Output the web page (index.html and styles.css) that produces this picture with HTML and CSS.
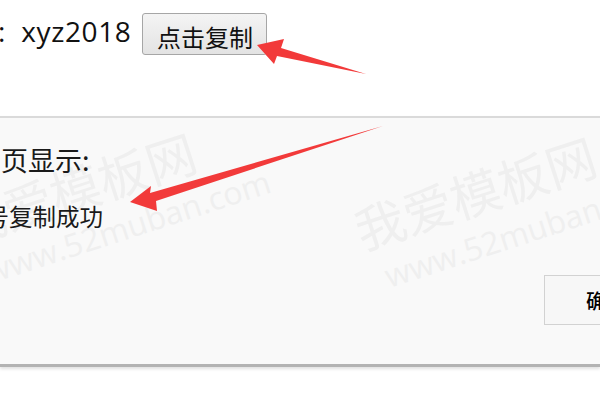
FILE: index.html
```html
<!DOCTYPE html>
<html lang="zh-CN">
<head>
<meta charset="utf-8">
<title>点击复制</title>
<link rel="stylesheet" href="styles.css">
</head>
<body>
<div class="page">
  <div class="top">
    <span class="colon">:</span><span class="account">xyz2018</span>
    <button class="copy-btn">点击复制</button>
  </div>
  <div class="dialog">
    <div class="wm wm-a">
      <div class="wm-cn">我爱模板网</div>
      <div class="wm-en">www.52muban.com</div>
    </div>
    <div class="wm wm-b">
      <div class="wm-cn">我爱模板网</div>
      <div class="wm-en">www.52muban.com</div>
    </div>
    <div class="title">此网页显示:</div>
    <div class="message">账号复制成功</div>
    <div class="actions">
      <button class="ok-btn">确定</button>
    </div>
  </div>
  <svg class="arrows" width="600" height="400" viewBox="0 0 600 400">
    <polygon points="257,45 284,39 281,48 366,74 277,56 274,64" fill="#f23a3a"/>
    <polygon points="130,202 151,186 150,193 383,126 156,201 157,211" fill="#f23a3a"/>
  </svg>
</div>
</body>
</html>
```
FILE: styles.css
```css
html, body {
  margin: 0;
  padding: 0;
  background: #ffffff;
}

.page {
  position: relative;
  width: 600px;
  height: 400px;
  overflow: hidden;
  font-family: "Open Sans", "Noto Sans CJK SC", sans-serif;
  color: #111;
}

.top {
  height: 116px;
  box-sizing: border-box;
  padding-top: 10px;
  display: flex;
  align-items: flex-start;
}

.colon {
  font-size: 28px;
  line-height: 42px;
  margin-left: -2px;
  margin-right: 16px;
}

.account {
  font-size: 28px;
  line-height: 42px;
  letter-spacing: 0.6px;
}

.copy-btn {
  margin-left: 11px;
  margin-top: 3px;
  width: 125px;
  height: 42px;
  box-sizing: border-box;
  border: 1px solid #a6a6a6;
  border-radius: 3px;
  background: linear-gradient(#f4f4f4, #e3e3e3);
  font-family: "Noto Sans CJK SC", sans-serif;
  font-size: 24px;
  line-height: 24px;
  padding: 6px 0 0 0;
  color: #111;
}

.dialog {
  position: relative;
  height: 220px;
  overflow: hidden;
  background: #f9f9f9;
  border-top: 2px solid #dadada;
  border-bottom: 3px solid #b3b3b3;
  box-shadow: 0 2px 3px rgba(0, 0, 0, 0.12);
  padding-top: 26px;
  box-sizing: content-box;
  font-family: "Noto Sans CJK SC", sans-serif;
}

.wm {
  position: absolute;
  transform: rotate(-18deg);
  transform-origin: 0 0;
  color: #efefef;
  white-space: nowrap;
  pointer-events: none;
}

.wm-a {
  left: -53px;
  top: 81px;
}

.wm-b {
  left: 347px;
  top: 85px;
}

.wm-cn {
  font-family: "Noto Sans CJK SC", sans-serif;
  font-size: 50px;
  line-height: 56px;
}

.wm-en {
  font-family: "Open Sans", sans-serif;
  font-size: 32px;
  line-height: 44px;
  padding-top: 4px;
  padding-left: 14px;
}

.title {
  position: relative;
  font-size: 27px;
  line-height: 32px;
  margin-left: -53px;
  color: #1a1a1a;
}

.message {
  position: relative;
  font-size: 23.5px;
  line-height: 30px;
  margin-top: 25px;
  margin-left: -38px;
  color: #1a1a1a;
}

.actions {
  position: relative;
  display: flex;
  justify-content: flex-end;
  margin-top: 44px;
}

.ok-btn {
  width: 124px;
  height: 50px;
  margin-right: -68px;
  box-sizing: border-box;
  border: 1px solid #d2d2d2;
  background: #f7f7f7;
  font-family: "Noto Sans CJK SC", sans-serif;
  font-size: 20px;
  font-weight: 500;
  color: #000;
  padding: 0;
}

.arrows {
  position: absolute;
  left: 0;
  top: 0;
  pointer-events: none;
}
```
